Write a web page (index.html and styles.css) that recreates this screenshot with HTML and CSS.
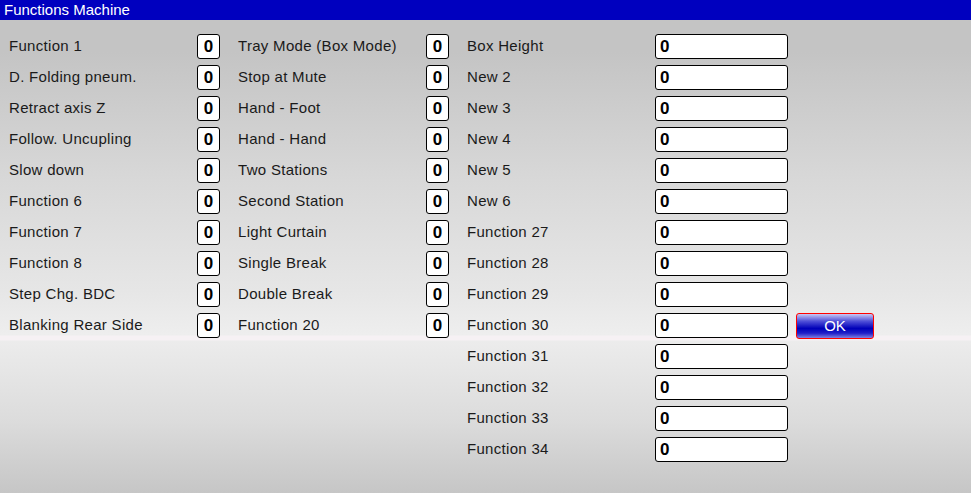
FILE: index.html
```html
<!DOCTYPE html>
<html>
<head>
    <title>Functions Machine</title>
    <link rel="stylesheet" href="styles.css">
</head>
<body>
    <div id="header">Functions Machine</div>
    <div class="panel">
        <!-- left column -->
        <div class="col">
            <div class="row"><span class="label">Function 1</span><span class="val">0</span></div>
            <div class="row"><span class="label">D. Folding pneum.</span><span class="val">0</span></div>
            <div class="row"><span class="label">Retract axis Z</span><span class="val">0</span></div>
            <div class="row"><span class="label">Follow. Uncupling</span><span class="val">0</span></div>
            <div class="row"><span class="label">Slow down</span><span class="val">0</span></div>
            <div class="row"><span class="label">Function 6</span><span class="val">0</span></div>
            <div class="row"><span class="label">Function 7</span><span class="val">0</span></div>
            <div class="row"><span class="label">Function 8</span><span class="val">0</span></div>
            <div class="row"><span class="label">Step Chg. BDC</span><span class="val">0</span></div>
            <div class="row"><span class="label">Blanking Rear Side</span><span class="val">0</span></div>
        </div>
        <!-- middle column -->
        <div class="col">
            <div class="row"><span class="label">Tray Mode (Box Mode)</span><span class="val">0</span></div>
            <div class="row"><span class="label">Stop at Mute</span><span class="val">0</span></div>
            <div class="row"><span class="label">Hand - Foot</span><span class="val">0</span></div>
            <div class="row"><span class="label">Hand - Hand</span><span class="val">0</span></div>
            <div class="row"><span class="label">Two Stations</span><span class="val">0</span></div>
            <div class="row"><span class="label">Second Station</span><span class="val">0</span></div>
            <div class="row"><span class="label">Light Curtain</span><span class="val">0</span></div>
            <div class="row"><span class="label">Single Break</span><span class="val">0</span></div>
            <div class="row"><span class="label">Double Break</span><span class="val">0</span></div>
            <div class="row"><span class="label">Function 20</span><span class="val">0</span></div>
        </div>
        <!-- right column -->
        <div class="col col-wide">
            <div class="row"><span class="label">Box Height</span><span class="val wide">0</span></div>
            <div class="row"><span class="label">New 2</span><span class="val wide">0</span></div>
            <div class="row"><span class="label">New 3</span><span class="val wide">0</span></div>
            <div class="row"><span class="label">New 4</span><span class="val wide">0</span></div>
            <div class="row"><span class="label">New 5</span><span class="val wide">0</span></div>
            <div class="row"><span class="label">New 6</span><span class="val wide">0</span></div>
            <div class="row"><span class="label">Function 27</span><span class="val wide">0</span></div>
            <div class="row"><span class="label">Function 28</span><span class="val wide">0</span></div>
            <div class="row"><span class="label">Function 29</span><span class="val wide">0</span></div>
            <div class="row"><span class="label">Function 30</span><span class="val wide">0</span><button class="ok">OK</button></div>
            <div class="row"><span class="label">Function 31</span><span class="val wide">0</span></div>
            <div class="row"><span class="label">Function 32</span><span class="val wide">0</span></div>
            <div class="row"><span class="label">Function 33</span><span class="val wide">0</span></div>
            <div class="row"><span class="label">Function 34</span><span class="val wide">0</span></div>
        </div>
    </div>
</body>
</html>
```

FILE: styles.css
```css
html, body {
    margin: 0;
    padding: 0;
    height: 493px;
    overflow: hidden;
}
body {
    font-family: "Liberation Sans", Arial, sans-serif;
    background: linear-gradient(to bottom,
        #c4c4c4 0px,
        #c4c4c4 52px,
        #d8d8d8 180px,
        #e6e6e6 290px,
        #eeeeee 335px,
        #f6f1f4 336px,
        #f6f1f4 340px,
        #ececec 341px,
        #dcdcdc 420px,
        #c6c6c6 493px);
}

#header {
    height: 20px;
    line-height: 19px;
    background-color: #0000bf;
    color: #fff;
    font-size: 15px;
    padding-left: 4px;
}

.panel {
    display: flex;
    padding-top: 11px;
}
.col {
    display: flex;
    flex-direction: column;
    width: 229px;
    flex: none;
}
.col-wide {
    width: 500px;
}
.row {
    display: flex;
    align-items: center;
    height: 31px;
    padding-left: 9px;
}
.label {
    width: 188px;
    flex: none;
    padding-bottom: 2px;
    font-size: 15px;
    letter-spacing: 0.3px;
    color: #1a1a1a;
    white-space: nowrap;
}
.val {
    box-sizing: border-box;
    flex: none;
    width: 23px;
    height: 25px;
    border: 1px solid #000;
    border-radius: 3px;
    background-color: #fff;
    font-weight: bold;
    font-size: 17px;
    line-height: 23px;
    text-align: center;
    color: #000;
}
.val.wide {
    width: 133px;
    text-align: left;
    padding-left: 4px;
}
.ok {
    flex: none;
    margin-left: 8px;
    box-sizing: border-box;
    width: 78px;
    height: 26px;
    padding: 0;
    border: 1px solid #ff0000;
    border-radius: 3px;
    color: #fff;
    font-family: "Liberation Sans", Arial, sans-serif;
    font-size: 15px;
    background: linear-gradient(to bottom, #c8c8f4 0%, #5050d8 30%, #0000b8 60%, #2020c8 80%, #8080e0 100%);
}
```
